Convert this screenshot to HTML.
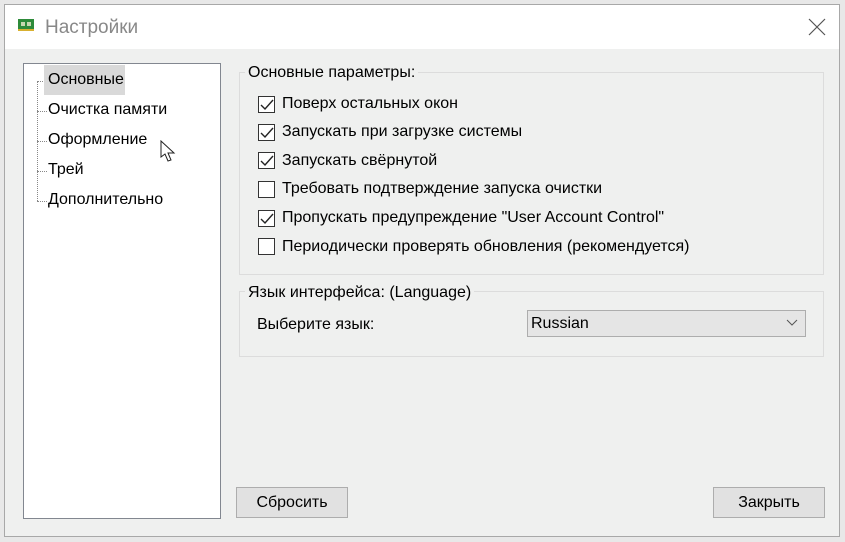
<!DOCTYPE html><html><head><meta charset="utf-8"><style>
body{margin:0;width:845px;height:542px;background:#e8e8e8;position:relative;overflow:hidden;font-family:"Liberation Sans",sans-serif;font-size:16px;color:#000}
.a{position:absolute}
.win{left:4px;top:4px;width:836px;height:533px;background:#eff0ef;border:1px solid #a8a8a8;box-sizing:border-box}
.title{left:5px;top:5px;width:834px;height:44px;background:#fff}
.t{white-space:nowrap}
.cb{width:15px;height:15px;border:1px solid #333;background:#fff}
.btn{background:#e1e1e1;border:1px solid #adadad;box-sizing:border-box;text-align:center;line-height:30px}
.grp{border:1px solid #dcdcdc;box-sizing:border-box}
.dot{border-top:1px dotted #888;width:10px}
</style></head><body>
<div class="a win"></div>
<div class="a title"></div>
<svg class="a" style="left:18px;top:19px" width="16" height="12"><rect x="0" y="0" width="16" height="12" fill="#2e8b3a"/><rect x="3" y="3" width="4" height="4" fill="#c8d8b0"/><rect x="9" y="3" width="4" height="4" fill="#c8d8b0"/><rect x="0" y="10" width="16" height="2" fill="#d8b030"/></svg>
<div class="a t" style="left:45px;top:17px;font-size:19px;color:#888">Настройки</div>
<svg class="a" style="left:808px;top:18px" width="18" height="18"><path d="M1 1L17 17M17 1L1 17" stroke="#555" stroke-width="1.2"/></svg>
<div class="a" style="left:23px;top:63px;width:198px;height:456px;background:#fff;border:1px solid #828790;box-sizing:border-box"></div>
<div class="a" style="left:37px;top:81px;height:120px;border-left:1px dotted #888"></div>
<div class="a dot" style="left:37px;top:81px"></div><div class="a dot" style="left:37px;top:111px"></div><div class="a dot" style="left:37px;top:141px"></div><div class="a dot" style="left:37px;top:171px"></div><div class="a dot" style="left:37px;top:201px"></div>
<div class="a" style="left:44px;top:65px;width:81px;height:30px;background:#d9d9d9"></div>
<div class="a t" style="left:48px;top:71px">Основные</div>
<div class="a t" style="left:48px;top:101px">Очистка памяти</div>
<div class="a t" style="left:48px;top:131px">Оформление</div>
<div class="a t" style="left:48px;top:161px">Трей</div>
<div class="a t" style="left:48px;top:191px">Дополнительно</div>
<svg class="a" style="left:160px;top:140px" width="20" height="26"><path d="M1 1L1 17L5 14L8 21L11 20L8 13L14 13Z" fill="#fff" stroke="#222" stroke-width="1"/></svg>
<div class="a grp" style="left:239px;top:72px;width:585px;height:203px"></div>
<div class="a t" style="left:245px;top:64px;background:#eff0ef;padding:0 3px">Основные параметры:</div>
<div class="a grp" style="left:239px;top:291px;width:585px;height:66px"></div>
<div class="a t" style="left:245px;top:284px;background:#eff0ef;padding:0 3px">Язык интерфейса: (Language)</div>
<div class="a cb" style="left:258px;top:96px"></div><div class="a t" style="left:282px;top:95px">Поверх остальных окон</div>
<div class="a cb" style="left:258px;top:124px"></div><div class="a t" style="left:282px;top:123px">Запускать при загрузке системы</div>
<div class="a cb" style="left:258px;top:152px"></div><div class="a t" style="left:282px;top:152px">Запускать свёрнутой</div>
<div class="a cb" style="left:258px;top:181px"></div><div class="a t" style="left:282px;top:180px">Требовать подтверждение запуска очистки</div>
<div class="a cb" style="left:258px;top:210px"></div><div class="a t" style="left:282px;top:209px">Пропускать предупреждение "User Account Control"</div>
<div class="a cb" style="left:258px;top:238px"></div><div class="a t" style="left:282px;top:238px">Периодически проверять обновления (рекомендуется)</div>
<svg class="a" style="left:259px;top:97px" width="16" height="130"><g fill="none" stroke="#222" stroke-width="1.4"><path d="M2 8L6 12L14 3"/><path d="M2 36L6 40L14 31"/><path d="M2 64L6 68L14 59"/><path d="M2 122L6 126L14 117"/></g></svg>
<div class="a t" style="left:257px;top:316px">Выберите язык:</div>
<div class="a" style="left:527px;top:310px;width:279px;height:27px;background:#e5e5e5;border:1px solid #adadad;box-sizing:border-box"></div>
<div class="a t" style="left:531px;top:315px">Russian</div>
<svg class="a" style="left:786px;top:319px" width="12" height="8"><path d="M1 1L6 6L11 1" fill="none" stroke="#555"/></svg>
<div class="a btn" style="left:236px;top:487px;width:112px;height:31px">Сбросить</div>
<div class="a btn" style="left:713px;top:487px;width:112px;height:31px">Закрыть</div>
</body></html>
